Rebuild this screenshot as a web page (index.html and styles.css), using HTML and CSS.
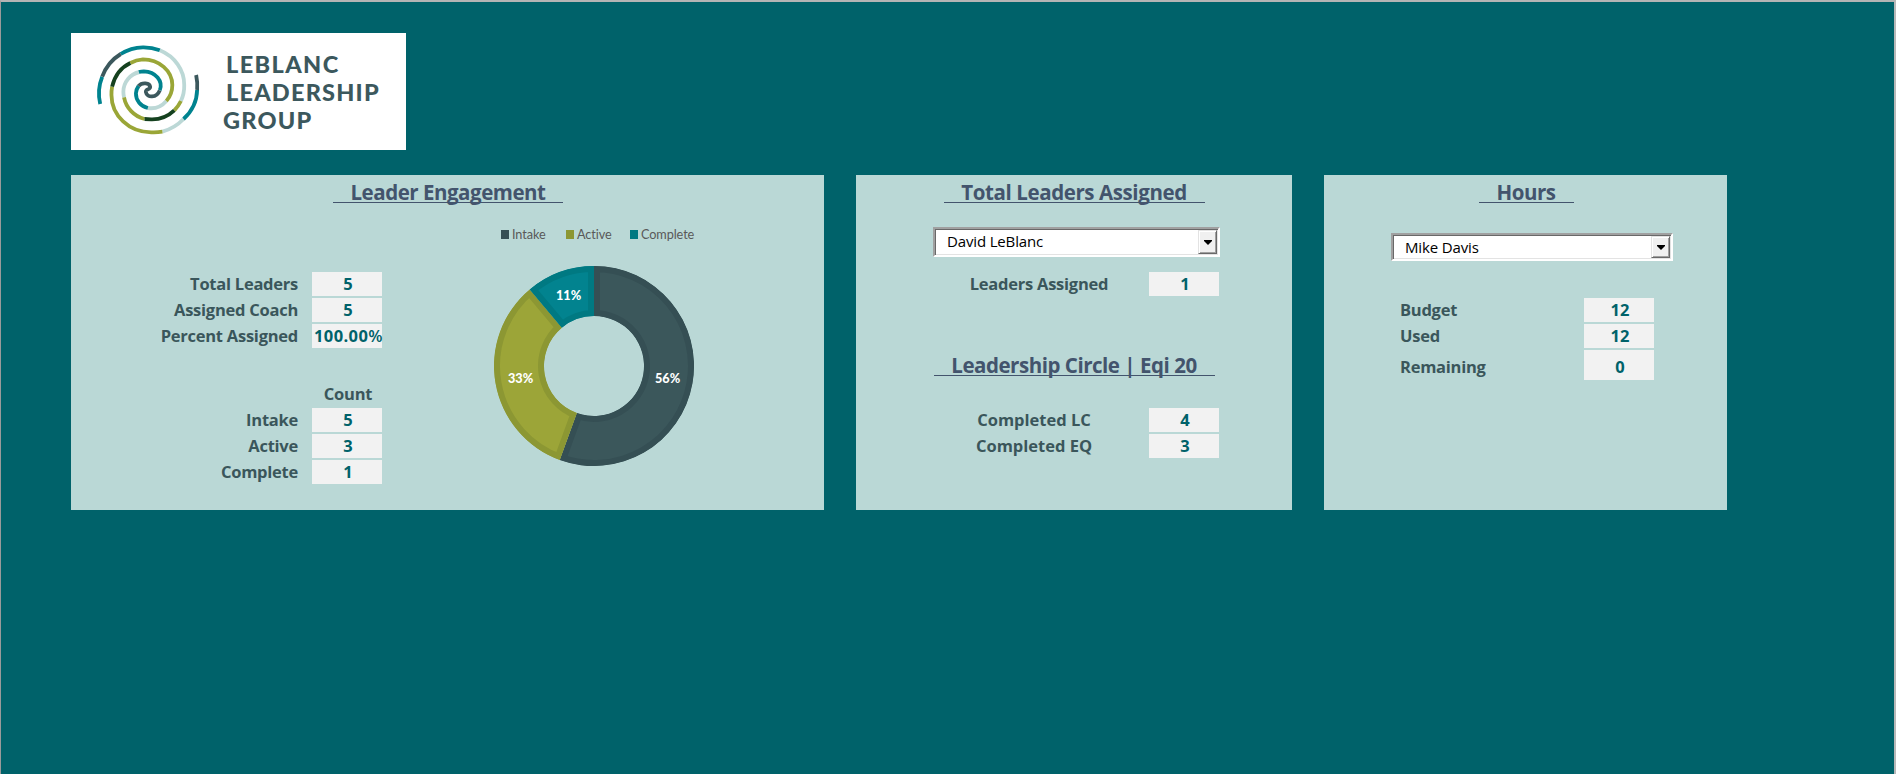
FILE: index.html
```html
<!DOCTYPE html>
<html lang="en">
<head>
<meta charset="utf-8">
<title>Leblanc Leadership Group</title>
<link rel="stylesheet" href="styles.css">
</head>
<body>
<main class="sheet">
  <header class="logo">
    <svg class="swirl" viewBox="0 0 390 330" width="129" height="110" preserveAspectRatio="none" fill="none" stroke-width="11.5">
      <path stroke="#bcd8d6" d="M226 46A125 113 0 0 1 300 150A100 103 0 0 1 290 198"/>
      <path stroke="#bcd8d6" d="M118 187A84 83 0 0 1 116 170A62 61 0 0 1 165 111"/>
      <path stroke="#bcd8d6" d="M298 252A141 127 0 0 1 234 290"/>
      <path stroke="#bcd8d6" d="M246 198A64 69 0 0 1 190 219"/>
      <path stroke="#9aa637" d="M290 198A100 103 0 0 1 270 226"/>
      <path stroke="#9aa637" d="M180 252A84 83 0 0 1 118 187"/>
      <path stroke="#9aa637" d="M234 290A141 127 0 0 1 200 292A120 112 0 0 1 80 180A95 107 0 0 1 82 155"/>
      <path stroke="#9aa637" d="M137 84A95 107 0 0 1 175 73A89 77 0 0 1 264 150A64 69 0 0 1 246 198"/>
      <path stroke="#15411f" d="M270 226A100 103 0 0 1 200 253L180 252"/>
      <path stroke="#15411f" d="M82 155A95 107 0 0 1 137 84"/>
      <path stroke="#00838f" d="M46 207A132 133 0 0 1 52 125"/>
      <path stroke="#00838f" d="M108 57A132 133 0 0 1 175 37A125 113 0 0 1 226 46"/>
      <path stroke="#00838f" d="M339 165A141 127 0 0 1 298 252"/>
      <path stroke="#00838f" d="M163 111A58 56 0 0 1 178 109A52 43 0 0 1 226 166"/>
      <path stroke="#00838f" d="M190 219A46 44 0 0 1 154 175Q154 164 162 153"/>
      <path stroke="#3c585d" d="M52 125A132 133 0 0 1 108 57"/>
      <path stroke="#3c585d" d="M336 120Q341 143 339 165"/>
      <path stroke="#3c585d" d="M162 153C172 141 196 143 197 156C197 165 183 160 184 171C187 190 217 189 226 166"/>
    </svg>
    <div class="wordmark"><span class="w1">LEBLANC</span><span class="w2">LEADERSHIP</span><span class="w3">GROUP</span></div>
  </header>

  <div class="panels">
    <section class="panel engagement">
      <h2 class="title t-eng"><span>Leader Engagement</span></h2>
      <div class="split">
        <dl class="stats">
          <dt>Total Leaders</dt><dd>5</dd>
          <dt>Assigned Coach</dt><dd>5</dd>
          <dt>Percent Assigned</dt><dd class="pct">100.00<i>%</i></dd>
          <dt class="head">Count</dt>
          <dt>Intake</dt><dd>5</dd>
          <dt>Active</dt><dd>3</dd>
          <dt>Complete</dt><dd>1</dd>
        </dl>
        <div class="chart">
          <ul class="legend">
            <li class="k-intake">Intake</li><li class="k-active">Active</li><li class="k-complete">Complete</li>
          </ul>
          <svg class="donut" viewBox="-101 -101 202 202" width="202" height="202">
            <defs>
              <path id="s1" d="M0-100A100 100 0 1 1-34.2 93.97L-17.1 46.98A50 50 0 1 0 0-50Z"/>
              <path id="s2" d="M-34.2 93.97A100 100 0 0 1-64.28-76.6L-32.14-38.3A50 50 0 0 0-17.1 46.98Z"/>
              <path id="s3" d="M-64.28-76.6A100 100 0 0 1 0-100L0-50A50 50 0 0 0-32.14-38.3Z"/>
              <clipPath id="c1"><use href="#s1"/></clipPath>
              <clipPath id="c2"><use href="#s2"/></clipPath>
              <clipPath id="c3"><use href="#s3"/></clipPath>
            </defs>
            <g stroke-width="12">
              <use href="#s1" clip-path="url(#c1)" fill="#3b575b" stroke="#354f54"/>
              <use href="#s2" clip-path="url(#c2)" fill="#9ca538" stroke="#8c9733"/>
              <use href="#s3" clip-path="url(#c3)" fill="#02838f" stroke="#007982"/>
            </g>
            <g class="pct-labels">
              <text x="73.6" y="17">56%</text><text x="-73.4" y="17">33%</text><text x="-25.4" y="-66">11%</text>
            </g>
          </svg>
        </div>
      </div>
    </section>

    <section class="panel assigned">
      <h2 class="title t-tot"><span>Total Leaders Assigned</span></h2>
      <div class="combo combo-leader"><span>David LeBlanc</span><b><svg width="8" height="5" viewBox="0 0 8 5"><path d="M0 0H8V1L4 5L0 1Z"/></svg></b></div>
      <dl class="stats"><dt>Leaders Assigned</dt><dd>1</dd></dl>
      <h2 class="title t-circle"><span>Leadership Circle | Eqi 20</span></h2>
      <dl class="stats lower"><dt>Completed LC</dt><dd>4</dd><dt>Completed EQ</dt><dd>3</dd></dl>
    </section>

    <section class="panel hours">
      <h2 class="title t-hours"><span>Hours</span></h2>
      <div class="combo combo-coach"><span>Mike Davis</span><b><svg width="8" height="5" viewBox="0 0 8 5"><path d="M0 0H8V1L4 5L0 1Z"/></svg></b></div>
      <dl class="stats"><dt>Budget</dt><dd>12</dd><dt>Used</dt><dd>12</dd><dt class="tall">Remaining</dt><dd class="tall">0</dd></dl>
    </section>
  </div>
</main>
</body>
</html>
```
FILE: styles.css
```css
* { box-sizing: border-box; }
body { margin: 0; font-family: "Open Sans", "Noto Sans", sans-serif; }
h2, dl, dd, ul { margin: 0; padding: 0; }
.sheet {
  height: 774px;
  padding: 31px 0 0 70px;
  background: #00626a;
  border: 1px solid #9a9a9a;
  border-top: 2px solid #b4b4b4;
  border-right: 2px solid #b8b8b8;
  border-bottom: 0;
}
.logo { display: flex; width: 335px; height: 117px; padding: 2px 0 0 14px; background: #fff; }
.wordmark {
  display: flex; flex-direction: column; padding: 15px 0 0 12px;
  font: 900 23.5px/28.2px Lato, sans-serif; letter-spacing: 1.2px; color: #3c585d;
}
.w1 { letter-spacing: 1.4px; }
.w3 { margin-left: -3px; letter-spacing: 1.2px; }
.panels { display: flex; gap: 32px; margin-top: 25px; }
.panel { height: 335px; background: #bad8d6; }
.engagement { width: 753px; }
.assigned { width: 436px; }
.hours { width: 403px; }

.title { display: flex; justify-content: center; height: 28px; font-size: 20.5px; line-height: 35px; font-weight: 700; letter-spacing: -0.47px; color: #43546d; white-space: pre; }
.title span { height: 28px; border-bottom: 1px solid #43546d; text-align: center; }
.t-eng, .t-hours { padding-left: 1px; }
.t-eng span { width: 230px; }
.t-tot span { width: 261px; letter-spacing: -0.4px; }
.t-circle span { width: 281px; }
.t-hours span { width: 95px; }

.stats { display: grid; row-gap: 2px; grid-auto-rows: 24px; font-size: 16.5px; font-weight: 700; line-height: 24px; color: #3a565b; }
.stats dt { letter-spacing: -0.25px; white-space: nowrap; }
.stats dd { padding-left: 2px; background: #f2f2f2; color: #00626a; text-align: center; white-space: nowrap; }
.split { display: flex; }
.engagement .stats { width: 311px; grid-template-columns: 227px 70px; column-gap: 14px; margin-top: 69px; grid-template-rows: 24px 24px 24px 56px; text-align: right; }
.engagement .head { grid-column: 2; padding-left: 2px; text-align: center; line-height: 88px; }
.stats .pct { letter-spacing: 0.4px; }
.pct i { font-style: normal; font-weight: 600; letter-spacing: 0; }
.chart { margin: 22px 0 0 102px; }
.legend { display: flex; list-style: none; height: 18px; margin-left: 17px; font: 12.7px/18px Lato, sans-serif; letter-spacing: -0.1px; color: #595959; }
.legend li { display: flex; align-items: center; gap: 3px; }
.legend li::before { content: ""; width: 8px; height: 9px; background: #354f54; }
.k-intake { width: 65px; }
.k-active { width: 64px; }
.legend .k-active::before { background: #8c9733; }
.legend .k-complete::before { background: #007982; }
.donut { display: block; margin: 22px 0 0 8.6px; }
.pct-labels { font: 900 12.7px Lato, sans-serif; fill: #fff; text-anchor: middle; }

.combo {
  display: flex; background: #fff; color: #000; font-size: 15px;
  border: 2px solid #a0a0a0; border-right-color: #fff; border-bottom-color: #fff;
  box-shadow: inset 1px 1px #696969, inset -1px -1px #e3e3e3;
}
.combo span { flex: 1; padding-left: 12px; letter-spacing: -0.15px; }
.combo b { display: flex; align-items: center; justify-content: center; width: 19px; margin: 1px 1px 1px 0; background: #f0f0f0; border: 1px solid; border-color: #e3e3e3 #696969 #696969 #e3e3e3; box-shadow: inset 1px 1px #fff, inset -1px -1px #a0a0a0; }
.combo-leader { width: 287px; height: 30px; margin: 24px 0 15px 77px; line-height: 24px; }
.combo-coach { width: 282px; height: 28px; margin: 30px 0 37px 67px; line-height: 24px; }
.assigned .stats { grid-template-columns: 160px 70px; justify-content: end; margin-right: 73px; column-gap: 30px; text-align: center; }
.assigned .lower { column-gap: 35px; }
.assigned .lower dt { letter-spacing: 0; }
.t-circle { margin: 52px 0 32px; }
.hours .stats { grid-template-columns: 170px 70px; column-gap: 14px; grid-template-rows: 24px 24px 30px; margin-left: 76px; }
.tall { line-height: 34px; }
```
